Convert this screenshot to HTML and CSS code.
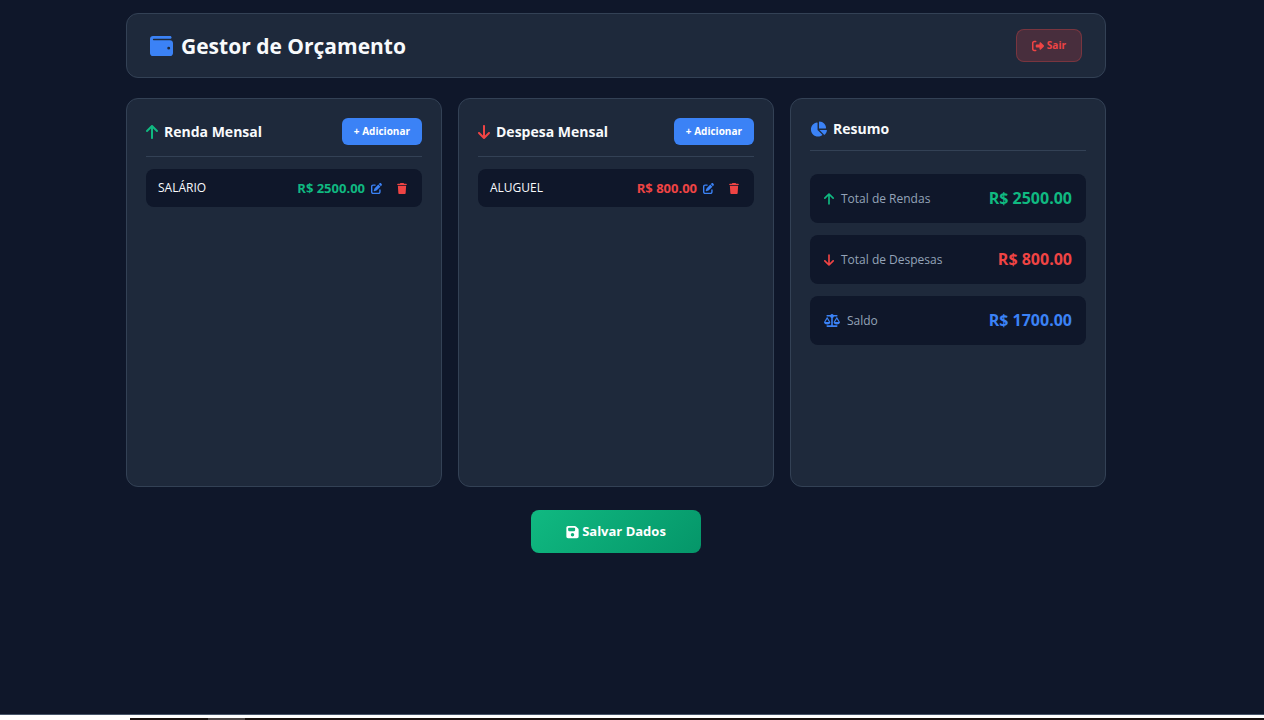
FILE: index.html
```html
<!DOCTYPE html>
<html lang="pt-BR">
  <head>
    <meta charset="UTF-8" />
    <meta name="viewport" content="width=device-width, initial-scale=1.0" />
    <title>Gestor de Orçamento</title>
    <link rel="stylesheet" href="styles.css">
  </head>
  <body>
    <!-- Icons -->
    <svg class="sprite" aria-hidden="true">
      <symbol id="wallet" viewBox="0 0 512 512">
        <path d="M64 32C28.7 32 0 60.7 0 96V416c0 35.3 28.7 64 64 64H448c35.3 0 64-28.7 64-64V192c0-35.3-28.7-64-64-64H80c-8.8 0-16-7.2-16-16s7.2-16 16-16H448c17.7 0 32-14.3 32-32s-14.3-32-32-32H64zM416 272a32 32 0 1 1 0 64 32 32 0 1 1 0-64z" />
      </symbol>
      <symbol id="logout" viewBox="0 0 512 512">
        <path d="M377.9 105.9L500.7 228.7c7.2 7.2 11.3 17.1 11.3 27.3s-4.1 20.1-11.3 27.3L377.9 406.1c-6.4 6.4-15 9.9-24 9.9c-18.7 0-33.9-15.2-33.9-33.9l0-62.1-128 0c-17.7 0-32-14.3-32-32l0-64c0-17.7 14.3-32 32-32l128 0 0-62.1c0-18.7 15.2-33.9 33.9-33.9c9 0 17.6 3.6 24 9.9zM160 96L96 96c-17.7 0-32 14.3-32 32l0 256c0 17.7 14.3 32 32 32l64 0c17.7 0 32 14.3 32 32s-14.3 32-32 32l-64 0c-53 0-96-43-96-96L0 128C0 75 43 32 96 32l64 0c17.7 0 32 14.3 32 32s-14.3 32-32 32z" />
      </symbol>
      <symbol id="arrow-up" viewBox="0 0 384 512">
        <path d="M214.6 41.4c-12.5-12.5-32.8-12.5-45.3 0l-160 160c-12.5 12.5-12.5 32.8 0 45.3s32.8 12.5 45.3 0L160 141.2V448c0 17.7 14.3 32 32 32s32-14.3 32-32V141.2L329.4 246.6c12.5 12.5 32.8 12.5 45.3 0s12.5-32.8 0-45.3l-160-160z" />
      </symbol>
      <symbol id="arrow-down" viewBox="0 0 384 512">
        <path d="M169.4 470.6c12.5 12.5 32.8 12.5 45.3 0l160-160c12.5-12.5 12.5-32.8 0-45.3s-32.8-12.5-45.3 0L224 370.8V64c0-17.7-14.3-32-32-32s-32 14.3-32 32V370.8L54.6 265.4c-12.5-12.5-32.8-12.5-45.3 0s-12.5 32.8 0 45.3l160 160z" />
      </symbol>
      <symbol id="edit" viewBox="0 0 512 512">
        <path d="M471.6 21.7c-21.9-21.9-57.3-21.9-79.2 0L362.3 51.7l97.9 97.9 30.1-30.1c21.9-21.9 21.9-57.3 0-79.2L471.6 21.7zm-299.2 220c-6.1 6.1-10.8 13.6-13.5 21.9l-29.6 88.8c-2.9 8.6-.6 18.1 5.8 24.6s15.9 8.7 24.6 5.8l88.8-29.6c8.2-2.7 15.7-7.4 21.9-13.5L437.7 172.3 339.7 74.3 172.4 241.7zM96 64C43 64 0 107 0 160V416c0 53 43 96 96 96H352c53 0 96-43 96-96V320c0-17.7-14.3-32-32-32s-32 14.3-32 32v96c0 17.7-14.3 32-32 32H96c-17.7 0-32-14.3-32-32V160c0-17.7 14.3-32 32-32h96c17.7 0 32-14.3 32-32s-14.3-32-32-32H96z" />
      </symbol>
      <symbol id="trash" viewBox="0 0 448 512">
        <path d="M135.2 17.7L128 32H32C14.3 32 0 46.3 0 64S14.3 96 32 96H416c17.7 0 32-14.3 32-32s-14.3-32-32-32H320l-7.2-14.3C307.4 6.8 296.3 0 284.2 0H163.8c-12.1 0-23.2 6.8-28.6 17.7zM416 128H32L53.2 467c1.6 25.3 22.6 45 47.9 45H346.9c25.3 0 46.3-19.7 47.9-45L416 128z" />
      </symbol>
      <symbol id="chart" viewBox="0 0 576 512">
        <path d="M304 240V16.6c0-9 7-16.6 16-16.6C443.7 0 544 100.3 544 224c0 9-7.6 16-16.6 16H304zM32 272C32 150.7 122.1 50.3 239 34.3c9.2-1.3 17 6.1 17 15.4V288L412.5 444.5c6.7 6.7 6.2 17.7-1.5 23.1C371.8 495.6 323.8 512 272 512C139.5 512 32 404.6 32 272zm526.4 16c9.3 0 16.6 7.8 15.4 17c-7.7 55.9-34.6 105.6-73.9 142.3c-6 5.6-15.4 5.2-21.2-.7L320 288H558.4z" />
      </symbol>
      <symbol id="scale" viewBox="0 0 640 512">
        <path d="M384 32H512c17.7 0 32 14.3 32 32s-14.3 32-32 32H398.4c-5.2 25.8-22.9 47.1-46.4 57.3V448H512c17.7 0 32 14.3 32 32s-14.3 32-32 32H320 128c-17.7 0-32-14.3-32-32s14.3-32 32-32H288V153.3c-23.5-10.3-41.2-31.6-46.4-57.3H128c-17.7 0-32-14.3-32-32s14.3-32 32-32H256c14.6-19.4 37.8-32 64-32s49.4 12.6 64 32zm55.6 288H584.4L512 195.8 439.6 320zM512 416c-62.9 0-115.2-34-126-78.9c-2.6-11 1-22.3 6.7-32.1l95.2-163.2c5-8.6 14.2-13.8 24.1-13.8s19.1 5.3 24.1 13.8l95.2 163.2c5.7 9.8 9.3 21.1 6.7 32.1C627.2 382 574.9 416 512 416zM126.8 195.8L54.4 320H199.3L126.8 195.8zM.9 337.1c-2.6-11 1-22.3 6.7-32.1l95.2-163.2c5-8.6 14.2-13.8 24.1-13.8s19.1 5.3 24.1 13.8l95.2 163.2c5.7 9.8 9.3 21.1 6.7 32.1C242 382 189.7 416 126.8 416S11.7 382 .9 337.1z" />
      </symbol>
      <symbol id="save" viewBox="0 0 448 512">
        <path d="M64 32C28.7 32 0 60.7 0 96V416c0 35.3 28.7 64 64 64H384c35.3 0 64-28.7 64-64V173.3c0-17-6.7-33.3-18.7-45.3L352 50.7C340 38.7 323.7 32 306.7 32H64zm0 96c0-17.7 14.3-32 32-32H288c17.7 0 32 14.3 32 32v64c0 17.7-14.3 32-32 32H96c-17.7 0-32-14.3-32-32V128zM224 288a64 64 0 1 1 0 128 64 64 0 1 1 0-128z" />
      </symbol>
    </svg>

    <div class="page">
      <div class="container">
        <header class="header">
          <h1><svg class="icon-wallet blue"><use href="#wallet" /></svg>Gestor de Orçamento</h1>
          <button type="button" class="btn-logout">
            <svg class="icon-logout"><use href="#logout" /></svg>Sair
          </button>
        </header>

        <main class="columns">
          <section class="card">
            <div class="card-header">
              <h2><svg class="icon-arrow green"><use href="#arrow-up" /></svg>Renda Mensal</h2>
              <button type="button" class="btn-add">+ Adicionar</button>
            </div>
            <ul class="items">
              <li class="item">
                <span class="item-name">SALÁRIO</span>
                <span class="item-value green">R$ 2500.00</span>
                <button type="button" class="btn-icon blue" aria-label="Editar">
                  <svg class="icon-edit"><use href="#edit" /></svg>
                </button>
                <button type="button" class="btn-icon red" aria-label="Excluir">
                  <svg class="icon-trash"><use href="#trash" /></svg>
                </button>
              </li>
            </ul>
          </section>

          <section class="card">
            <div class="card-header">
              <h2><svg class="icon-arrow red"><use href="#arrow-down" /></svg>Despesa Mensal</h2>
              <button type="button" class="btn-add">+ Adicionar</button>
            </div>
            <ul class="items">
              <li class="item">
                <span class="item-name">ALUGUEL</span>
                <span class="item-value red">R$ 800.00</span>
                <button type="button" class="btn-icon blue" aria-label="Editar">
                  <svg class="icon-edit"><use href="#edit" /></svg>
                </button>
                <button type="button" class="btn-icon red" aria-label="Excluir">
                  <svg class="icon-trash"><use href="#trash" /></svg>
                </button>
              </li>
            </ul>
          </section>

          <section class="card">
            <div class="card-header">
              <h2><svg class="icon-chart blue"><use href="#chart" /></svg>Resumo</h2>
            </div>
            <div class="summary">
              <div class="summary-item">
                <span class="summary-label"><svg class="icon-total green"><use href="#arrow-up" /></svg>Total de Rendas</span>
                <span class="summary-value green">R$ 2500.00</span>
              </div>
              <div class="summary-item">
                <span class="summary-label"><svg class="icon-total red"><use href="#arrow-down" /></svg>Total de Despesas</span>
                <span class="summary-value red">R$ 800.00</span>
              </div>
              <div class="summary-item">
                <span class="summary-label"><svg class="icon-scale blue"><use href="#scale" /></svg>Saldo</span>
                <span class="summary-value blue">R$ 1700.00</span>
              </div>
            </div>
          </section>
        </main>

        <button type="button" class="btn-save">
          <svg class="icon-save"><use href="#save" /></svg>Salvar Dados
        </button>
      </div>
    </div>

    <footer class="taskbar">
      <div class="taskbar-start"></div>
      <div class="taskbar-apps"><div class="taskbar-active"></div></div>
    </footer>
  </body>
</html>
```

FILE: styles.css
```css
* {
  margin: 0;
  padding: 0;
  box-sizing: border-box;
}

body {
  display: flex;
  flex-direction: column;
  min-height: 100vh;
  background-color: #0f172a;
  color: #f8fafc;
  font-family: "Segoe UI", "Open Sans", "Noto Sans", sans-serif;
}

button {
  border: none;
  font-family: inherit;
  cursor: pointer;
}

svg {
  fill: currentColor;
  flex-shrink: 0;
}

.sprite {
  display: none;
}

.green {
  color: #10b981;
}
.red {
  color: #ef4444;
}
.blue {
  color: #3b82f6;
}

.page {
  flex: 1;
  padding: 13px 32px 13px 0;
}

.container {
  display: flex;
  flex-direction: column;
  width: 100%;
  max-width: 980px;
  margin: 0 auto;
}

.header {
  display: flex;
  justify-content: space-between;
  align-items: center;
  padding: 15px 23px;
  margin-bottom: 20px;
  background-color: #1e293b;
  border: 1px solid #334155;
  border-radius: 12px;
}
.header h1 {
  display: flex;
  align-items: center;
  gap: 8px;
  font-size: 21px;
  line-height: 32px;
}

.btn-logout {
  display: flex;
  align-items: center;
  gap: 3px;
  padding: 8px 15px;
  background-color: rgba(239, 68, 68, 0.2);
  border: 1px solid rgba(239, 68, 68, 0.3);
  border-radius: 8px;
  color: #ef4444;
  font-size: 10px;
  font-weight: 700;
  line-height: 15px;
}

.columns {
  display: grid;
  grid-template-columns: repeat(3, 1fr);
  gap: 16px;
}

.card {
  min-height: 389px;
  padding: 19px;
  background-color: #1e293b;
  border: 1px solid #334155;
  border-radius: 12px;
}

.card-header {
  display: flex;
  justify-content: space-between;
  align-items: center;
  padding-bottom: 11px;
  margin-bottom: 12px;
  border-bottom: 1px solid #334155;
}
.card-header h2 {
  display: flex;
  align-items: center;
  gap: 6px;
  font-size: 14px;
  line-height: 21px;
}

.btn-add {
  padding: 5px 12px;
  background-color: #3b82f6;
  border-radius: 6px;
  color: #fff;
  font-size: 10px;
  font-weight: 700;
  line-height: 17px;
}

.items {
  list-style: none;
}

.item {
  display: flex;
  align-items: center;
  padding: 9px 12px;
  background-color: #0f172a;
  border-radius: 8px;
  font-size: 12px;
  line-height: 20px;
}

.item-name {
  flex: 1;
}

.item-value {
  font-size: 13px;
  font-weight: 700;
}

.btn-icon {
  display: flex;
  padding: 4px 6px;
  background: none;
}
.btn-icon + .btn-icon {
  padding: 4px 3px 4px 9px;
}

.summary {
  display: flex;
  flex-direction: column;
  gap: 12px;
  padding-top: 11px;
}

.summary-item {
  display: flex;
  justify-content: space-between;
  align-items: center;
  padding: 12px 14px;
  background-color: #0f172a;
  border-radius: 8px;
}

.summary-label {
  display: flex;
  align-items: center;
  gap: 7px;
  color: #94a3b8;
  font-size: 12px;
}

.summary-value {
  font-size: 16px;
  font-weight: 700;
  line-height: 25px;
}

.btn-save {
  display: flex;
  align-items: center;
  align-self: center;
  gap: 3px;
  padding: 11px 35px;
  margin-top: 23px;
  background: linear-gradient(135deg, #10b981, #059669);
  border-radius: 8px;
  color: #fff;
  font-size: 13px;
  font-weight: 700;
  line-height: 21px;
}

.icon-wallet {
  width: 23px;
  height: 24px;
}
.icon-logout {
  width: 12px;
  height: 12px;
}
.icon-arrow {
  width: 12px;
  height: 16px;
}
.icon-chart {
  width: 17px;
  height: 16px;
}
.icon-total {
  width: 10px;
  height: 14px;
}
.icon-scale {
  width: 16px;
  height: 13px;
}
.icon-edit {
  width: 11px;
  height: 11px;
}
.icon-trash {
  width: 10px;
  height: 11px;
}
.icon-save {
  width: 13px;
  height: 14px;
}

.taskbar {
  display: flex;
  height: 6px;
  border-top: 1px solid #475569;
  background-color: #fff;
}
.taskbar-start {
  width: 130px;
}
.taskbar-apps {
  flex: 1;
  margin-top: 3px;
  padding-left: 78px;
  background-color: #17110f;
}
.taskbar-active {
  width: 37px;
  height: 2px;
  background-color: #4b4646;
}
```
